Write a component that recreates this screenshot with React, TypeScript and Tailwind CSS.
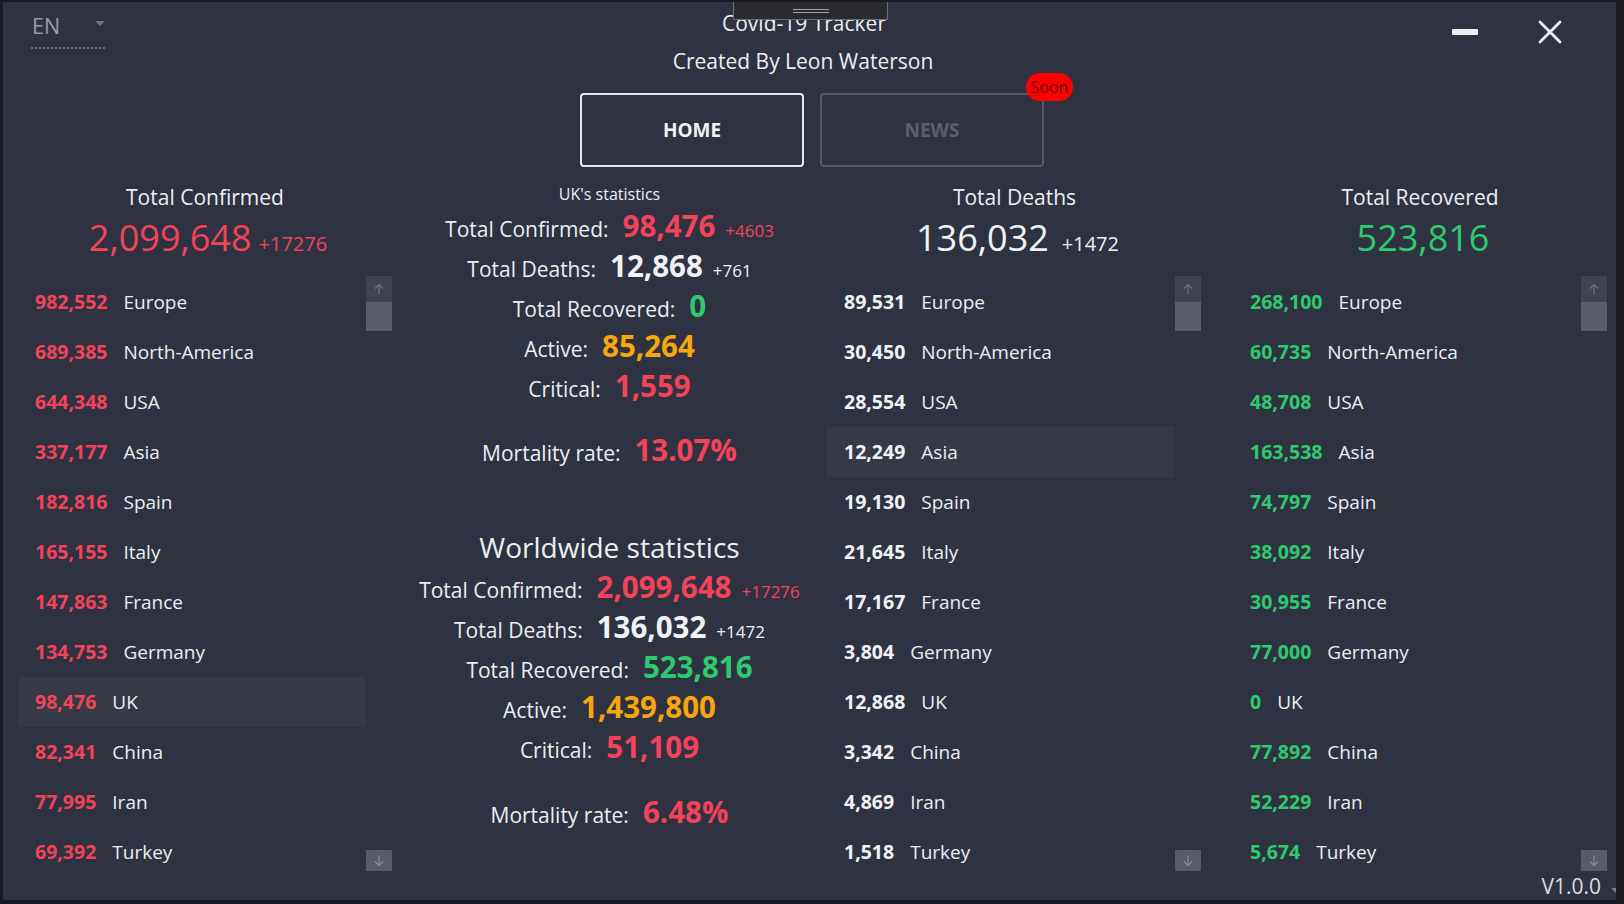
type Row = [string, string];

const confirmedRows: Row[] = [
  ["982,552", "Europe"],
  ["689,385", "North-America"],
  ["644,348", "USA"],
  ["337,177", "Asia"],
  ["182,816", "Spain"],
  ["165,155", "Italy"],
  ["147,863", "France"],
  ["134,753", "Germany"],
  ["98,476", "UK"],
  ["82,341", "China"],
  ["77,995", "Iran"],
  ["69,392", "Turkey"],
];

const deathRows: Row[] = [
  ["89,531", "Europe"],
  ["30,450", "North-America"],
  ["28,554", "USA"],
  ["12,249", "Asia"],
  ["19,130", "Spain"],
  ["21,645", "Italy"],
  ["17,167", "France"],
  ["3,804", "Germany"],
  ["12,868", "UK"],
  ["3,342", "China"],
  ["4,869", "Iran"],
  ["1,518", "Turkey"],
];

const recoveredRows: Row[] = [
  ["268,100", "Europe"],
  ["60,735", "North-America"],
  ["48,708", "USA"],
  ["163,538", "Asia"],
  ["74,797", "Spain"],
  ["38,092", "Italy"],
  ["30,955", "France"],
  ["77,000", "Germany"],
  ["0", "UK"],
  ["77,892", "China"],
  ["52,229", "Iran"],
  ["5,674", "Turkey"],
];

function Arrow({ up, color }: { up?: boolean; color: string }) {
  return (
    <svg width="10" height="12" viewBox="0 0 10 12" fill="none" stroke={color} strokeWidth="1.2">
      {up ? (
        <>
          <path d="M5 1.5V11.5" />
          <path d="M1 5.5L5 1.5L9 5.5" />
        </>
      ) : (
        <>
          <path d="M5 0.5V10.5" />
          <path d="M1 6.5L5 10.5L9 6.5" />
        </>
      )}
    </svg>
  );
}

function Scrollbar() {
  return (
    <div className="w-[26px] h-[595px] -mt-[1px] flex flex-col">
      <div className="h-[26px] bg-[#41444f] flex items-center justify-center">
        <Arrow up color="#6f727c" />
      </div>
      <div className="h-[29px] bg-[#5b5e6a]" />
      <div className="flex-1" />
      <div className="h-[21px] bg-[#595c68] flex items-center justify-center">
        <Arrow color="#8a8d96" />
      </div>
    </div>
  );
}

function RegionColumn({
  title,
  total,
  delta,
  totalClass,
  numClass,
  rows,
  highlight,
  className = "",
  deltaGap = "gap-[7px]",
}: {
  title: string;
  total: string;
  delta?: string;
  totalClass: string;
  numClass: string;
  rows: Row[];
  highlight: number;
  className?: string;
  deltaGap?: string;
}) {
  return (
    <div className={`w-[374px] flex flex-col ${className}`}>
      <div className="h-[30px] text-[21px] leading-[30px] text-center text-[#eceef2]">{title}</div>
      <div className={`mt-[2px] h-[48px] flex items-baseline justify-center pl-[6px] ${deltaGap}`}>
        <span className={`text-[36px] leading-[48px] font-medium ${totalClass}`}>{total}</span>
        {delta && <span className={`text-[20px] font-medium ${totalClass}`}>{delta}</span>}
      </div>
      <div className="mt-[15px] flex">
        <div className="w-[348px] flex flex-col">
          {rows.map(([n, name], i) => (
            <div
              key={name}
              className={`h-[50px] flex items-center gap-[16px] pl-[17px] ${i === highlight ? "bg-[#363946]" : ""}`}
            >
              <span className={`text-[19.5px] font-bold ${numClass}`}>{n}</span>
              <span className="text-[19px] text-[#eceef2]">{name}</span>
            </div>
          ))}
        </div>
        <Scrollbar />
      </div>
    </div>
  );
}

function StatLine({
  label,
  value,
  valueClass,
  delta,
  deltaClass = "",
}: {
  label: string;
  value: string;
  valueClass: string;
  delta?: string;
  deltaClass?: string;
}) {
  return (
    <div className="h-[40px] flex items-center justify-center">
      <div className="flex items-baseline">
        <span className="text-[21px] text-[#eceef2]">{label}</span>
        <span className={`ml-[14px] text-[29.5px] leading-[36px] font-bold ${valueClass}`}>{value}</span>
        {delta && <span className={`ml-[10px] text-[17px] ${deltaClass}`}>{delta}</span>}
      </div>
    </div>
  );
}

export default function App() {
  const red = "text-[#f2435a]";
  const green = "text-[#2dca6e]";
  const orange = "text-[#f7a60d]";
  const white = "text-[#f1f2f5]";

  return (
    <div className="relative w-[1624px] h-[904px] overflow-hidden bg-[#2f3241] border-t-2 border-l-[3px] border-r-[8px] border-b-4 border-[#1a1b20] font-['Open_Sans',sans-serif] text-[#eceef2]">
      {/* drag handle */}
      <div className="absolute left-[730px] -top-[2px] w-[155px] h-[20px] bg-[#2a2b30] border border-[#6c6e74] flex flex-col items-center pt-[8px] gap-[2px]">
        <div className="w-[36px] h-px bg-[#9fa1a6]" />
        <div className="w-[36px] h-px bg-[#9fa1a6]" />
      </div>

      {/* header */}
      <div className="grid grid-cols-[1fr_auto_1fr] h-[165px]">
        <div className="pl-[28px] pt-[10px]">
          <div className="w-[74px] h-[37px] flex justify-between border-b-2 border-dotted border-[#6e717b]">
            <span className="text-[21.5px] leading-[28px] text-[#9b9da5] pl-[1px]">EN</span>
            <span className="mt-[9px] w-0 h-0 border-x-[5.5px] border-x-transparent border-t-[5px] border-t-[#6e717b]" />
          </div>
        </div>

        <div className="pl-[5px] pt-[6px] flex flex-col items-center">
          <div className="pr-[16px] text-[21px] leading-[30px]">Covid-19 Tracker</div>
          <div className="pr-[18px] mt-[8px] text-[21px] leading-[30px]">Created By Leon Waterson</div>
          <div className="mt-[17px] flex gap-[16px]">
            <div className="w-[224px] h-[74px] rounded-[4px] border-2 border-[#e6e7eb] flex items-center justify-center text-[19px] font-bold text-[#f1f2f5]">
              HOME
            </div>
            <div className="relative w-[224px] h-[74px] rounded-[4px] border-2 border-[#565964] flex items-center justify-center text-[19px] font-bold text-[#5c5f6a]">
              NEWS
              <span className="absolute -right-[31px] -top-[22px] w-[47px] h-[28px] rounded-full bg-[#ff0000] text-[#5e0000] text-[16px] leading-[28px] text-center font-normal">
                Soon
              </span>
            </div>
          </div>
        </div>

        <div className="flex justify-end items-center gap-[60px] pr-[54px] h-[24px] mt-[18px]">
          <div className="w-[26px] h-[6px] rounded-[1px] bg-[#eceef2]" />
          <svg width="24" height="24" viewBox="0 0 24 24" stroke="#f1f2f5" strokeWidth="2.6" strokeLinecap="round">
            <path d="M2 2L22 22" />
            <path d="M22 2L2 22" />
          </svg>
        </div>
      </div>

      {/* main */}
      <div className="mt-[15px] pl-[15px] flex">
        <RegionColumn
          title="Total Confirmed"
          total="2,099,648"
          delta="+17276"
          totalClass={red}
          numClass={red}
          rows={confirmedRows}
          highlight={8}
        />

        <div className="w-[435px] flex flex-col">
          <div className="h-[24px] text-[16px] leading-[24px] text-center">UK's statistics</div>
          <div className="mt-[1px]">
            <StatLine label="Total Confirmed:" value="98,476" valueClass={red} delta="+4603" deltaClass={red} />
            <StatLine label="Total Deaths:" value="12,868" valueClass={white} delta="+761" deltaClass={white} />
            <StatLine label="Total Recovered:" value="0" valueClass={green} />
            <StatLine label="Active:" value="85,264" valueClass={orange} />
            <StatLine label="Critical:" value="1,559" valueClass={red} />
          </div>
          <div className="mt-[24px]">
            <StatLine label="Mortality rate:" value="13.07%" valueClass={red} />
          </div>
          <div className="mt-[56px] h-[40px] text-[28px] leading-[40px] text-center">Worldwide statistics</div>
          <div className="mt-[1px]">
            <StatLine label="Total Confirmed:" value="2,099,648" valueClass={red} delta="+17276" deltaClass={red} />
            <StatLine label="Total Deaths:" value="136,032" valueClass={white} delta="+1472" deltaClass={white} />
            <StatLine label="Total Recovered:" value="523,816" valueClass={green} />
            <StatLine label="Active:" value="1,439,800" valueClass={orange} />
            <StatLine label="Critical:" value="51,109" valueClass={red} />
          </div>
          <div className="mt-[25px]">
            <StatLine label="Mortality rate:" value="6.48%" valueClass={red} />
          </div>
        </div>

        <RegionColumn
          title="Total Deaths"
          total="136,032"
          delta="+1472"
          totalClass={white}
          numClass={white}
          rows={deathRows}
          highlight={3}
          className="w-[375px]"
          deltaGap="gap-[13px]"
        />

        <RegionColumn
          title="Total Recovered"
          total="523,816"
          totalClass={green}
          numClass={green}
          rows={recoveredRows}
          highlight={-1}
          className="ml-[31px]"
        />
      </div>

      {/* version */}
      <div className="absolute -right-[5px] bottom-[1px] flex items-center gap-[10px]">
        <span className="text-[21px] leading-[26px] text-[#dcdde1]">V1.0.0</span>
        <span className="mt-[8px] w-0 h-0 border-x-[5.5px] border-x-transparent border-t-[5px] border-t-[#7a7d86]" />
      </div>
    </div>
  );
}
